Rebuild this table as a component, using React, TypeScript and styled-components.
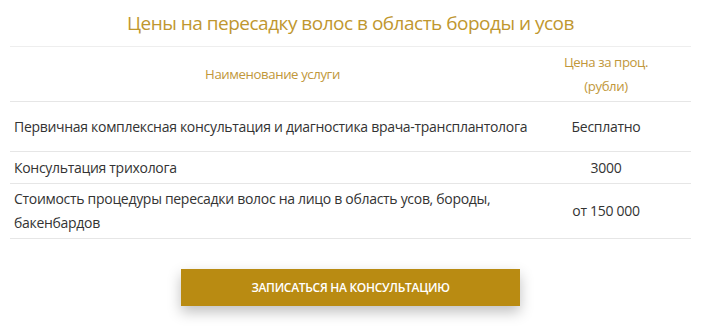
import React from "react";
import styled, { createGlobalStyle } from "styled-components";

const Global = createGlobalStyle`
  body { margin: 0; background: #fff; font-family: "Open Sans", "Liberation Sans", sans-serif; }
`;

const Page = styled.div`
  width: 703px;
  height: 330px;
  display: flex;
  flex-direction: column;
  align-items: center;
  padding: 10px 12px 0 10px;
  box-sizing: border-box;
`;

const Title = styled.h2`
  margin: 0;
  height: 36px;
  font-size: 19px;
  font-weight: 400;
  color: #bf972f;
  letter-spacing: -0.5px;
  line-height: 26px;
`;

const Table = styled.div`
  width: 100%;
  display: grid;
  grid-template-columns: 525px 1fr;
  border-top: 1px solid #eeeeee;
`;

const Cell = styled.div<{ $h: number; $price?: boolean; $head?: boolean }>`
  height: ${(p) => p.$h}px;
  box-sizing: border-box;
  border-bottom: 1px solid #e6e6e6;
  display: flex;
  align-items: center;
  justify-content: ${(p) => (p.$price || p.$head ? "center" : "flex-start")};
  text-align: ${(p) => (p.$price || p.$head ? "center" : "left")};
  padding: ${(p) => (p.$price ? "0 14px 0 0" : p.$head ? "0" : "0 0 0 4px")};
  font-size: ${(p) => (p.$head ? "13.2px" : "14px")};
  letter-spacing: ${(p) => (p.$head ? "-0.4px" : "-0.3px")};
  line-height: 24px;
  white-space: ${(p) => (p.$price || p.$head ? "nowrap" : "normal")};
  color: ${(p) => (p.$head ? "#c1973a" : "#333")};
`;

const Name = styled.span`
  max-width: 530px;
`;

const Button = styled.button`
  margin-top: 30px;
  width: 339px;
  height: 37px;
  border: none;
  background: #b98b12;
  color: #fff;
  font-family: inherit;
  font-size: 12px;
  font-weight: 600;
  letter-spacing: -0.3px;
  box-shadow: 0 6px 14px rgba(0, 0, 0, 0.25);
`;

const rows = [
  { name: "Первичная комплексная консультация и диагностика врача-трансплантолога", price: "Бесплатно", h: 50 },
  { name: "Консультация трихолога", price: "3000", h: 32 },
  { name: "Стоимость процедуры пересадки волос на лицо в область усов, бороды, бакенбардов", price: "от 150 000", h: 55 },
];

export default function App() {
  return (
    <Page>
      <Global />
      <Title>Цены на пересадку волос в область бороды и усов</Title>
      <Table>
        <Cell $h={55} $head>Наименование услуги</Cell>
        <Cell $h={55} $head $price>Цена за проц.<br />(рубли)</Cell>
        {rows.map((r) => (
          <React.Fragment key={r.name}>
            <Cell $h={r.h}><Name>{r.name}</Name></Cell>
            <Cell $h={r.h} $price>{r.price}</Cell>
          </React.Fragment>
        ))}
      </Table>
      <Button>ЗАПИСАТЬСЯ НА КОНСУЛЬТАЦИЮ</Button>
    </Page>
  );
}
